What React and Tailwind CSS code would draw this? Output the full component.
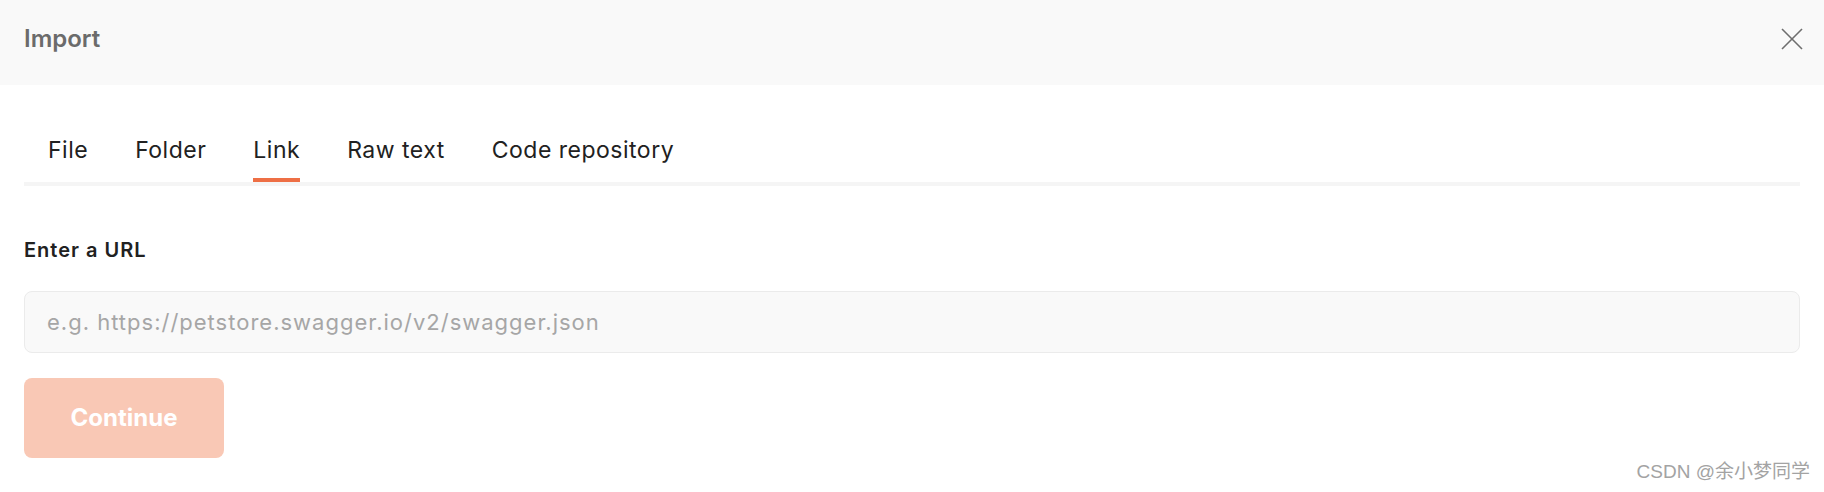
import { useState } from 'react';

const TABS = ['File', 'Folder', 'Link', 'Raw text', 'Code repository'];

const CloseIcon = () => (
  <svg width="22" height="22" viewBox="0 0 22 22" fill="none" stroke="#6e6e6e" strokeWidth="1.6">
    <line x1="1" y1="1" x2="21" y2="21" />
    <line x1="21" y1="1" x2="1" y2="21" />
  </svg>
);

const App = () => {
  const [active, setActive] = useState('Link');
  const [url, setUrl] = useState('');

  return (
    <div
      className="relative w-full h-[492px] bg-white overflow-hidden"
      style={{ fontFamily: 'Inter, "Noto Sans", sans-serif' }}
    >
      {/* Header */}
      <div className="flex items-center justify-between h-[85px] bg-[#f9f9f9] pl-6 pr-[21px] pb-2">
        <h1 className="text-[24px] font-semibold text-[#6b6b6b] leading-none">Import</h1>
        <button type="button" className="flex items-center justify-center">
          <CloseIcon />
        </button>
      </div>

      <div className="px-6">
        {/* Tabs */}
        <div className="flex gap-[47px] pl-[24px] pt-[49px] border-b-4 border-[#f5f5f5]">
          {TABS.map((t) => (
            <button
              key={t}
              type="button"
              onClick={() => setActive(t)}
              className={`pb-4 text-[23px] leading-8 tracking-[0.5px] text-[#212121] ${
                active === t ? 'border-b-4 border-[#ee6f45]' : 'border-b-4 border-transparent'
              }`}
            >
              <span className="block -mb-1">{t}</span>
            </button>
          ))}
        </div>

        {/* Form */}
        <p className="mt-[50px] text-[20px] font-semibold leading-7 tracking-[1px] text-[#212121]">Enter a URL</p>
        <input
          value={url}
          onChange={(e) => setUrl(e.target.value)}
          placeholder="e.g. https://petstore.swagger.io/v2/swagger.json"
          className="mt-[27px] block w-full h-[62px] rounded-lg border border-[#ebebeb] bg-[#f9f9f9] px-[22px] text-[22px] tracking-[1px] text-[#212121] placeholder-[#a6a6a6] outline-none"
        />
        <button
          type="button"
          disabled={!url.trim()}
          className="mt-[25px] flex items-center justify-center w-[200px] h-[80px] rounded-lg bg-[#f9c8b5] text-white text-[24px] font-bold"
        >
          Continue
        </button>
      </div>

      <span
        className="absolute right-[14px] bottom-[10px] text-[19px] leading-5 text-[#a3a3a3]"
        style={{ fontFamily: '"Liberation Sans", "Noto Sans CJK SC", sans-serif' }}
      >
        CSDN @余小梦同学
      </span>
    </div>
  );
};

export default App;
